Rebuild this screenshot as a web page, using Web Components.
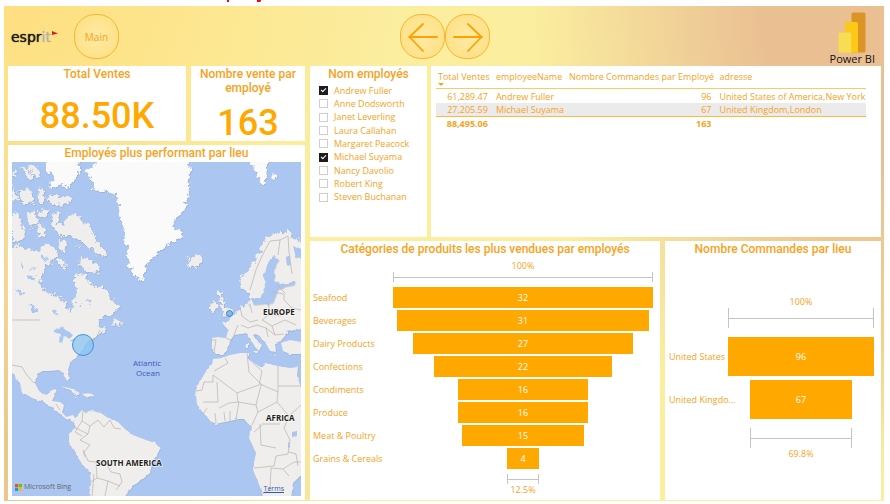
<!DOCTYPE html>
<html lang="fr">
<head>
<meta charset="utf-8">
<title>Tableau de bord des ventes</title>
<style>
  html { height: 100%; }
  body {
    margin: 0; min-height: 100%; display: flex; background: #fff;
    color: #f9a21b; font: 9px/12px "Open Sans", "Noto Sans", sans-serif;
    --accent: #ffa800; --title-font: Roboto, "Liberation Sans", sans-serif;
  }
  sales-dashboard { flex: 1; }
</style>
</head>
<body>
<sales-dashboard></sales-dashboard>
<script>
function define(name, html, setup) {
  const template = document.createElement('template');
  template.innerHTML = html;
  customElements.define(name, class extends HTMLElement {
    constructor() {
      super();
      this.attachShadow({ mode: 'open' }).append(template.content.cloneNode(true));
    }
    connectedCallback() {
      if (setup && !this.ready) { this.ready = true; setup(this, this.shadowRoot); }
    }
  });
}

define('esprit-logo', `
<style>
  :host { display: flex; color: #1c1a10; font: 14px/20px "DejaVu Sans", sans-serif; text-shadow: 0 0 1px currentColor; }
  span { color: #b3b1ae; }
  svg { width: 7px; height: 6px; margin-top: 4px; }
</style>
espr<span>it</span>
<svg viewBox="0 0 7 6" aria-hidden="true"><path d="M1 0 7 2.5 1 4Z" fill="#d3202c"/></svg>`);

define('power-bi-logo', `
<style>
  :host { display: flex; flex-direction: column; align-items: center; color: #111; font: 11px/12px "Open Sans", sans-serif; white-space: nowrap; }
  svg { width: 28px; height: 41px; display: block; }
</style>
<svg viewBox="0 0 28 41" aria-hidden="true">
  <rect x="13.5" y="0.5" width="14" height="40" rx="1.5" fill="#db9426"/>
  <path d="M8 10h10q2 0 2 2v28.500H7V11q0-1 1-1Z" fill="#fdc916"/>
  <path d="M1.500 20.500h10q1.700 0 1.700 1.700v18.300H1.500q-1 0-1-1v-18q0-1 1-1Z" fill="#f7dc54"/>
</svg>
<span>Power BI</span>`);

define('round-button', `
<style>
  :host { display: block; }
  button {
    display: grid; place-items: center; width: 45px; height: 45px; padding: 0;
    border: 1px solid #fbb62c; border-radius: 21px; color: inherit; font: inherit;
    background: radial-gradient(circle, #ffe9a0 10%, #fde083 90%);
  }
</style>
<button type="button"><slot></slot></button>`, (host, root) => {
  if (host.hasAttribute('label')) root.querySelector('button').setAttribute('aria-label', host.getAttribute('label'));
});

define('page-header', `
<style>
  :host { display: grid; grid-template-columns: 1fr auto 1fr; align-items: center; height: 60px; padding: 1px 5px 0 7px; box-sizing: border-box; }
  .start { display: flex; align-items: center; gap: 16px; }
  nav { display: flex; }
  nav svg { width: 30px; height: 30px; fill: none; stroke: #ffa200; stroke-width: 1.800; stroke-linecap: round; stroke-linejoin: round; }
  power-bi-logo { justify-self: end; margin: 4px 4px 0 0; }
</style>
<div class="start"><esprit-logo></esprit-logo><round-button style="font-size:10px">Main</round-button></div>
<nav>
  <round-button label="Précédent"><svg viewBox="0 0 30 30"><path d="M29 15H1M15 2 1.500 15 15 29"/></svg></round-button>
  <round-button label="Suivant"><svg viewBox="0 0 30 30"><path d="M1 15H29M15 2 28.500 15 15 29"/></svg></round-button>
</nav>
<power-bi-logo></power-bi-logo>`);

define('dash-panel', `
<style>
  :host { display: flex; flex-direction: column; background: #fff; min-width: 0; min-height: 0; }
  h2 { margin: 0; padding: 1px 8px 0; text-align: center; font: 500 12px/14px var(--title-font); }
</style>
<h2></h2><slot></slot>`, (host, root) => {
  root.querySelector('h2').textContent = host.getAttribute('heading') || '';
  root.querySelector('h2').hidden = !host.hasAttribute('heading');
});

define('kpi-value', `
<style>
  :host { flex: 1; display: grid; place-items: center; padding-top: 9px; color: var(--accent); font: 500 36px/36px var(--title-font); }
</style>
<slot></slot>`);

define('employee-slicer', `
<style>
  ul { list-style: none; margin: 0; padding: 3px 0 0 9px; display: grid; grid-auto-rows: 1fr; height: 120px; }
  label { display: flex; align-items: center; gap: 6px; height: 100%; white-space: nowrap; }
  input { appearance: none; margin: 0; width: 9px; height: 9px; border: 1px solid #cfcfcf; background: #fff; display: grid; }
  input:checked { background: #1d1d1d; border-color: #1d1d1d; }
  input:checked::before { content: ""; width: 4px; height: 2px; margin: 1px; border: solid #fff; border-width: 0 0 1px 1px; transform: rotate(-45deg); }
</style>
<ul></ul>`, (host, root) => {
  const list = root.querySelector('ul');
  host.getAttribute('names').split(',').forEach(entry => {
    const item = document.createElement('li');
    item.innerHTML = '<label><input type="checkbox"><span></span></label>';
    item.querySelector('input').checked = entry.startsWith('*');
    item.querySelector('span').textContent = entry.replace('*', '');
    list.append(item);
  });
});

define('sales-table', `
<style>
  :host { display: block; padding: 4px 15px 0 5px; }
  table { width: 100%; border-collapse: collapse; table-layout: fixed; }
  th, td { padding: 0 4px; text-align: left; font-weight: 400; white-space: nowrap; line-height: 13px; }
  th:first-child { padding: 0 2px; }
  thead th { height: 18px; vertical-align: top; border-bottom: 1px solid #fcc868; }
  tbody tr:first-child td { padding-top: 1px; }
  tbody tr:last-child { background: #ebebeb; }
  tfoot td { border-top: 1px solid #fbb940; font-weight: 700; }
  .n { text-align: right; }
  i { display: block; width: 0; height: 0; border: 3px solid transparent; border-top-color: #f9a21b; border-bottom: 0; }
</style>
<table>
  <colgroup><col style="width:13%"><col style="width:17%"><col style="width:35%"><col></colgroup>
  <thead><tr><th scope="col">Total Ventes<i></i></th><th scope="col">employeeName</th><th scope="col" class="n">Nombre Commandes par Employé</th><th scope="col">adresse</th></tr></thead>
  <tbody>
    <tr><td class="n">61,289.47</td><td>Andrew Fuller</td><td class="n">96</td><td>United States of America,New York</td></tr>
    <tr><td class="n">27,205.59</td><td>Michael Suyama</td><td class="n">67</td><td>United Kingdom,London</td></tr>
  </tbody>
  <tfoot><tr><td class="n">88,495.06</td><td></td><td class="n">163</td><td></td></tr></tfoot>
</table>`);

define('funnel-chart', `
<style>
  :host { flex: 1; display: flex; flex-direction: column; padding: 4px 7px 4px 3px; --label: 80px; --cap: 10px; --space: 5px; --gap: 2px; }
  .scale { margin-left: var(--label); display: flex; flex-direction: column; align-items: center; }
  .bracket { height: var(--cap); box-sizing: border-box; border: solid #c4c4c4; border-width: 0 1px; display: flex; align-items: center; }
  .bracket::before { content: ""; flex: 1; height: 1px; background: #c4c4c4; }
  .bars { flex: 1; display: grid; grid-auto-rows: 1fr; gap: var(--gap); padding: var(--space) 0; }
  .row { display: grid; grid-template-columns: var(--label) 1fr; align-items: center; }
  .row span { white-space: nowrap; width: 0; }
  .bar { position: relative; justify-self: center; height: 100%; display: grid; place-items: center; background: var(--accent); color: #fff; }
</style>
<div class="scale"><div>100%</div><div class="bracket" style="width:100%"></div></div>
<div class="bars"></div>
<div class="scale"><div class="bracket" id="last"></div><div id="ratio"></div></div>`, (host, root) => {
  const rows = host.getAttribute('rows').split(';').map(r => r.split(':'));
  const top = Number(rows[0][1]);
  let width = '100%';
  for (const [name, value] of rows) {
    width = (100 * value / top).toFixed(1) + '%';
    const row = document.createElement('div');
    row.className = 'row';
    row.innerHTML = '<span></span><div class="bar"></div>';
    row.firstChild.textContent = name;
    row.lastChild.textContent = value;
    row.lastChild.style.width = width;
    root.querySelector('.bars').append(row);
  }
  root.querySelector('#last').style.width = width;
  root.querySelector('#ratio').textContent = width;
});

define('sales-map', `
<style>
  :host { flex: 1; position: relative; margin: 2px 4px 4px; min-height: 200px; display: block; overflow: hidden; background: #abc6f1; }
  .map { position: absolute; inset: 0; width: 100%; height: 100%; display: block; }
  .land path { fill: #efeeec; }
  .land .ice { fill: #fafafa; }
  .land .water { fill: #abc6f1; }
  .borders { fill: none; stroke: #b9b2ac; stroke-width: .7; }
  text { font: 700 8px "Open Sans", sans-serif; fill: #222; stroke: #fff; stroke-width: 1.500px; paint-order: stroke; stroke-opacity: .7; }
  .sea { font-weight: 400; fill: #3c5bbd; stroke: none; }
  .brand { position: absolute; left: 3px; bottom: 4px; display: flex; gap: 2px; align-items: center; color: #62676d; font-size: 7px; line-height: 10px; }
  .brand svg { width: 7px; height: 7px; }
  a { position: absolute; right: 17px; bottom: 2px; color: #3558b0; font-size: 7px; line-height: 10px; }
</style>
<svg class="map" viewBox="12 162 289 334" preserveAspectRatio="xMidYMid slice" role="img" aria-label="Carte des employés">
  <defs>
    <filter id="coast" x="-5%" y="-5%" width="110%" height="110%">
      <feTurbulence type="fractalNoise" baseFrequency=".22" numOctaves="3" seed="4" result="n"/>
      <feDisplacementMap in="SourceGraphic" in2="n" scale="9" xChannelSelector="R" yChannelSelector="G" result="d"/>
      <feDropShadow in="d" dx=".4" dy=".6" stdDeviation=".5" flood-color="#8c98ad" flood-opacity=".6"/>
    </filter>
    <filter id="soft" x="-5%" y="-5%" width="110%" height="110%">
      <feTurbulence type="fractalNoise" baseFrequency=".15" numOctaves="2" seed="9"/>
      <feDisplacementMap in="SourceGraphic" scale="3" xChannelSelector="R" yChannelSelector="G" result="d"/>
      <feDropShadow in="d" dx=".4" dy=".6" stdDeviation=".5" flood-color="#8c98ad" flood-opacity=".5"/>
    </filter>
  </defs>
  <g class="land" filter="url(#coast)">
    <path class="ice" d="M99 155 96 164 85 173 92 178 95 184 92 190 100 191 110 193 116 196 119 205 120 218 124 226 123 236 127 248 129 265 133 274 141 281 144 275 146 265 155 256 162 249 175 241 184 234 178 229 172 227 176 218 184 210 187 200 190 193 188 185 191 172 189 155Z"/>
    <path d="M5 249 18 245 28 249 38 252 47 243 55 247 57 255 52 262 46 266 42 275 41 285 46 292 55 296 64 300 67 308 71 313 73 302 76 292 74 282 76 273 84 275 88 280 96 287 105 287 110 297 117 305 118 312 108 315 100 319 97 325 95 333 5 340Z"/>
    <path class="ice" d="M45 160 79 160 80 170 76 176 72 184 65 188 60 184 52 190 50 184 55 177 49 173Z"/>
    <path d="M20 166 27 168 33 176 28 179ZM28 165 38 168 40 178 32 174ZM13 170 17 174 12 178ZM18 190 27 189 34 193 34 203 22 204ZM38 189 43 188 44 203 39 204ZM12 185 19 200 12 202ZM47 196 70 196 71 204 52 205ZM12 214 18 212 22 225 25 235 17 242 12 240ZM27 212 35 213 37 224 31 227ZM39 211 48 209 47 217 41 218ZM38 224 44 226 46 236 39 238ZM53 214 60 212 57 222 63 226 68 216 76 214 83 221 92 229 96 238 102 247 106 253 104 257 95 252 84 244 78 238 69 236 62 236 55 231 51 224ZM59 238 65 241 67 250 60 252ZM76 246 80 246 79 250ZM58 258 65 262 66 269 58 266ZM81 257 92 261 100 268 97 273 88 272 80 265Z"/>
    <path class="water" d="M30 268 38 266 34 272ZM25 275 35 276 32 280ZM16 289 24 292 20 297ZM28 303 38 311 33 314ZM75 303 82 303 80 306ZM85 301 92 300 90 304ZM40 256 50 259 44 261ZM20 262 25 266 21 268ZM54 310 58 313 55 316Z"/>
    <path class="ice" d="M251 160 270 160 266 168 267 175 262 187 259 181 257 174ZM272 174 277 177 275 182 271 179Z"/>
    <path d="M186 256 190 259 195 255 201 257 202 262 198 266 191 269 186 264 190 262Z"/>
    <path d="M241 288 240 277 248 271 254 262 258 253 263 243 270 236 280 232 290 232 292 238 310 244 310 330 294 326 285 335 280 330 285 315 250 315 240 318 232 317 242 307 248 304 252 299 247 291Z"/>
    <path d="M217 290 222 293 221 297 225 301 227 307 232 311 231 316 221 317 224 312 220 309 223 304 219 300ZM210 305 215 301 218 307 215 312 210 311Z"/>
    <path d="M116 318 122 322 121 327 112 325ZM100 329 107 326 104 332 97 334Z"/>
  </g>
  <g class="land" filter="url(#soft)">
    <path class="water" d="M273 255 279 260 274 268 274 281 280 284 295 282 295 285 284 287 278 290 273 303 254 305 251 298 260 298 265 287 264 275 268 263ZM293 246 301 250 301 258 296 256ZM286 257 289 256 290 265 287 265Z"/>
    <path d="M5 325 97 325 104 331 96 336 90 341 85 345 80 353 75 358 70 363 68 369 70 378 67 381 63 373 59 370 50 371 43 371 37 374 35 383 39 391 47 395 51 390 57 389 54 397 52 401 60 402 64 405 62 412 66 417 73 415 76 419 73 422 66 419 60 414 53 408 43 402 32 398 22 392 20 384 14 375 5 365Z"/>
    <path d="M75 418 82 410 86 413 92 411 101 413 108 418 118 422 125 429 133 435 146 440 155 443 160 448 157 455 152 462 150 473 143 479 134 484 129 490 123 500 88 500 91 485 90 473 82 464 75 453 69 443 69 436 74 428Z"/>
    <path d="M62 386 72 389 80 393 77 395 70 391ZM82 394 90 393 95 396 86 397ZM74 396 78 397 75 398Z"/>
    <path d="M222 322 228 322 233 315 248 314 310 314 310 331 300 328 294 331 287 330 285 336 280 342 275 343 276 352 270 351 265 342 256 334 253 335 257 341 262 345 259 351 255 347 250 338 246 333 241 334 234 335 230 341 228 350 223 354 216 354 212 349 212 338 217 337 226 338 228 331ZM245 343 248 343 248 348 246 348ZM253 351 258 351 257 354ZM281 343 290 340 301 342 310 340 310 353 298 354 290 354 283 351ZM271 355 276 355 276 356Z"/>
    <path d="M213 359 222 358 230 355 240 353 249 353 249 360 254 363 262 368 266 363 278 366 290 368 298 367 297 376 310 390 310 470 299 477 293 483 291 500 264 500 260 487 253 470 256 453 249 438 251 427 244 419 238 419 230 421 215 424 204 415 197 404 196 395 198 385 205 373 212 364Z"/>
    <path class="water" d="M55 329 62 327 68 332 72 335 69 339 64 335 62 343 59 342 60 334 55 332ZM69 341 76 338 75 341ZM292 432 297 431 297 436 292 437ZM288 440 290 447 288 448ZM298 372 302 380 302 390 299 382Z"/>
  </g>
  <g class="borders">
    <path d="M12 365 22 367 26 374 34 383M12 320H40M56 404 60 410M83 411 82 421 90 426 88 434 80 440 90 445 84 452 88 461 96 462 97 478 91 482M82 421 75 432 82 436M90 426 98 420 104 427 110 420 114 428 121 429M96 462 106 463 111 472 120 474 122 482 116 490M97 478 108 481 105 496M108 481 120 486M74 427 88 434M83 450 85 457M94 474 92 496M90 345 97 336 100 330"/>
    <path d="M250 290 256 270 262 256 270 241 280 240 288 236M280 240 278 255M288 236 289 252 292 274M240 307 242 316 250 322 258 320M250 304 252 313M268 302 270 314 262 320 272 326 285 320 296 325M270 314 280 316 292 308 301 310M272 292 284 294 284 300 292 308M277 285 285 293M241 325 248 328 257 325 266 328 268 337M272 326 275 335 284 334M266 328 275 335M212 340 216 340 214 352M226 338 233 341M234 335 238 325"/>
    <path d="M213 375 237 393 259 385 262 371 253 363M247 353 249 372 262 385M278 366V392L260 384M278 386H301M213 375V382H204L202 390 196 391M217 382 218 402H203M237 393 238 402 229 403 219 408M238 402 256 405 261 385M278 392 277 402 258 412 256 405M277 402 289 416 301 405M258 412 252 425M289 416 284 428 290 440 288 454 276 456 274 466 254 468M260 424 261 445 276 448M230 411 230 421M224 412 225 421M215 413 216 423M239 402 236 419M207 408 203 414M271 468 270 490 262 494M271 468 283 469 289 476M283 469 294 462 301 462M262 424 280 424M225 358 228 363 214 371M289 452 296 454 298 466M254 432 262 425"/>
  </g>
  <circle cx="83" cy="345" r="10.500" fill="#8ac6f4" fill-opacity=".75" stroke="#4a92cf"/>
  <circle cx="229.500" cy="313.500" r="3" fill="#7fbdf0" stroke="#3f83c0"/>
  <text x="263" y="315">EUROPE</text>
  <text x="266" y="421">AFRICA</text>
  <text x="96" y="466">SOUTH AMERICA</text>
  <text class="sea" x="147" y="366" text-anchor="middle">Atlantic</text>
  <text class="sea" x="148" y="376" text-anchor="middle">Ocean</text>
</svg>
<div class="brand"><svg viewBox="0 0 7 7" aria-hidden="true"><path fill="#f25022" d="M0 0h3.200v3.200H0z"/><path fill="#7fba00" d="M3.800 0H7v3.200H3.800z"/><path fill="#00a4ef" d="M0 3.800h3.200V7H0z"/><path fill="#ffb900" d="M3.800 3.800H7V7H3.800z"/></svg>Microsoft Bing</div>
<a href="#terms">Terms</a>`);

define('sales-dashboard', `
<style>
  :host { display: flex; flex-direction: column; padding: 0 6px 3px 4px; }
  .strip { height: 6px; }
  .strip svg { display: block; height: 6px; width: 100%; }
  main {
    flex: 1; display: flex; flex-direction: column; padding-bottom: 1px;
    background:
      radial-gradient(ellipse 40% 95% at 100% 0, #eac093 35%, #eac09300 100%),
      radial-gradient(ellipse 42% 85% at 0 100%, #edc68c 15%, #edc68c00 100%),
      radial-gradient(ellipse 45% 60% at 0 0, #fee083 10%, #fee08300 100%),
      radial-gradient(ellipse 20% 35% at 100% 55%, #ffdc82 20%, #ffdc8200 100%),
      #fbee9f;
  }
  .body { flex: 1; display: grid; grid-template-columns: 297fr 571fr; gap: 5px; padding: 0 3px 0 4px; }
  .left, .right { display: flex; flex-direction: column; gap: 4px; min-width: 0; }
  .kpis { display: grid; grid-template-columns: 178fr 114fr; gap: 5px; height: 75px; }
  .top { display: grid; grid-template-columns: 117fr 450fr; gap: 4px; height: 171px; }
  .bottom { flex: 1; display: grid; grid-template-columns: 350fr 216fr; gap: 5px; }
  .left > dash-panel { flex: 1; }
  .places { padding: 40px 7px 40px 4px; --label: 59px; --cap: 20px; --space: 9px; --gap: 4px; }
</style>
<div class="strip"><svg aria-hidden="true"><path fill="#f00" d="M223 0h2v2h-2zM253 0h4v1l-1 1h-3z"/></svg></div>
<main>
  <page-header></page-header>
  <div class="body">
    <div class="left">
      <div class="kpis">
        <dash-panel heading="Total Ventes"><kpi-value>88.50K</kpi-value></dash-panel>
        <dash-panel heading="Nombre vente par employé"><kpi-value>163</kpi-value></dash-panel>
      </div>
      <dash-panel heading="Employés plus performant par lieu"><sales-map></sales-map></dash-panel>
    </div>
    <div class="right">
      <div class="top">
        <dash-panel heading="Nom employés"><employee-slicer names="*Andrew Fuller,Anne Dodsworth,Janet Leverling,Laura Callahan,Margaret Peacock,*Michael Suyama,Nancy Davolio,Robert King,Steven Buchanan"></employee-slicer></dash-panel>
        <dash-panel><sales-table></sales-table></dash-panel>
      </div>
      <div class="bottom">
        <dash-panel heading="Catégories de produits les plus vendues par employés"><funnel-chart rows="Seafood:32;Beverages:31;Dairy Products:27;Confections:22;Condiments:16;Produce:16;Meat &amp; Poultry:15;Grains &amp; Cereals:4"></funnel-chart></dash-panel>
        <dash-panel heading="Nombre Commandes par lieu"><funnel-chart class="places" rows="United States ...:96;United Kingdo...:67"></funnel-chart></dash-panel>
      </div>
    </div>
  </div>
</main>`);
</script>
</body>
</html>
